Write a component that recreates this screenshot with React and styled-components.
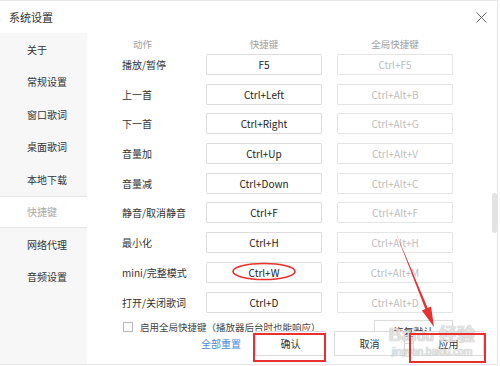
import React from "react";
import styled, { createGlobalStyle } from "styled-components";

const Global = createGlobalStyle`
  html, body { margin: 0; padding: 0; background: #fff; }
  body { font-family: "Noto Sans CJK SC", "Microsoft YaHei", sans-serif; }
  * { box-sizing: border-box; }
`;

const Window = styled.div`
  position: relative;
  width: 498px;
  height: 365px;
  border: 1px solid #e6e6e6;
  border-left: none;
  background: #fff;
  display: flex;
  flex-direction: column;
  overflow: hidden;
`;

const TitleBar = styled.div`
  height: 32px;
  flex: none;
  display: flex;
  align-items: center;
  justify-content: space-between;
  padding: 0 10px 0 9px;
  font-size: 11px;
  color: #333;
`;

const CloseBtn = styled.div`
  width: 12px;
  height: 12px;
  display: flex;
  align-items: center;
  justify-content: center;
`;

const Body = styled.div`
  flex: 1;
  display: flex;
  min-height: 0;
`;

const Sidebar = styled.div`
  width: 87px;
  flex: none;
  background: #f7f7f7;
  display: flex;
  flex-direction: column;
`;

const NavItem = styled.div`
  height: 32.5px;
  display: flex;
  align-items: center;
  padding-left: 27px;
  font-size: 10px;
  color: ${(p) => (p.$active ? "#a8a8a8" : "#333")};
  background: ${(p) => (p.$active ? "#fff" : "transparent")};
  border-top: 1px solid ${(p) => (p.$active ? "#e6e6e6" : "transparent")};
  border-bottom: 1px solid ${(p) => (p.$active ? "#e6e6e6" : "transparent")};
`;

const Content = styled.div`
  position: relative;
  flex: 1;
  overflow: hidden;
  padding-left: 35px;
`;

const HeadRow = styled.div`
  display: grid;
  grid-template-columns: 69px 116px 116px;
  column-gap: 15px;
  height: 21px;
  align-items: center;
`;

const Grid = styled.div`
  display: grid;
  grid-template-columns: 69px 116px 116px;
  column-gap: 15px;
  row-gap: 8.7px;
  align-items: center;
`;

const HeadCell = styled.div`
  font-size: 9.5px;
  color: #a0a0a0;
  text-align: ${(p) => (p.$center ? "center" : "left")};
  padding-left: ${(p) => (p.$center ? "0" : "11px")};
`;

const Label = styled.div`
  font-size: 10px;
  color: #333;
  white-space: nowrap;
`;

const KeyBox = styled.div`
  height: 21px;
  border: 1px solid ${(p) => (p.$global ? "#e4e4e4" : "#dcdcdc")};
  border-radius: 1px;
  display: flex;
  align-items: center;
  justify-content: center;
  font-size: 10px;
  color: ${(p) => (p.$global ? "#bdbdbd" : "#222")};
`;

const CheckRow = styled.div`
  display: flex;
  align-items: center;
  height: 18px;
  margin-top: 5px;
  width: 331px;
`;

const Checkbox = styled.span`
  width: 10px;
  height: 10px;
  border: 1px solid #b8b8b8;
  background: #fff;
  margin-left: 1px;
  margin-right: 7px;
  flex: none;
`;

const CheckText = styled.span`
  font-size: 9.5px;
  color: #444;
  white-space: nowrap;
`;

const RestoreBtn = styled.div`
  margin-left: auto;
  align-self: flex-start;
  margin-top: 2px;
  width: 79px;
  height: 24px;
  flex: none;
  border: 1px solid #dcdcdc;
  display: flex;
  align-items: center;
  justify-content: center;
  font-size: 10px;
  color: #333;
  background: #fff;
`;

const Footer = styled.div`
  position: absolute;
  right: 13px;
  bottom: 8px;
  display: flex;
  align-items: center;
  gap: 8px;
`;

const ResetLink = styled.span`
  font-size: 10px;
  color: #4a8ad6;
  margin-right: 6px;
`;

const Button = styled.div`
  width: 71px;
  height: 25px;
  border: 1px solid #dcdcdc;
  background: #fff;
  display: flex;
  align-items: center;
  justify-content: center;
  font-size: 10px;
  color: #333;
`;

const ScrollThumb = styled.div`
  position: absolute;
  right: 0;
  top: 160px;
  width: 5px;
  height: 40px;
  border-radius: 3px;
  background: #e2e2e2;
`;

const Watermark = styled.div`
  position: absolute;
  right: 22px;
  bottom: 6px;
  display: flex;
  flex-direction: column;
  align-items: center;
  pointer-events: none;
  color: rgba(255, 255, 255, 0.7);
  text-shadow: 0 0 1px rgba(130, 130, 130, 0.5), 0 0 1px rgba(130, 130, 130, 0.5);
  font-family: "Liberation Sans", "Noto Sans CJK SC", sans-serif;
`;

const WmTop = styled.div`
  font-size: 18px;
  font-weight: bold;
  line-height: 20px;
  white-space: nowrap;
`;

const WmSmall = styled.span`
  font-size: 14px;
`;

const WmBottom = styled.div`
  font-size: 10px;
  line-height: 12px;
  white-space: nowrap;
`;

const Annotations = styled.svg`
  position: absolute;
  left: 0;
  top: 0;
  width: 500px;
  height: 366px;
  pointer-events: none;
`;

const navItems = ["关于", "常规设置", "窗口歌词", "桌面歌词", "本地下载", "快捷键", "网络代理", "音频设置"];

const rows = [
  ["播放/暂停", "F5", "Ctrl+F5"],
  ["上一首", "Ctrl+Left", "Ctrl+Alt+B"],
  ["下一首", "Ctrl+Right", "Ctrl+Alt+G"],
  ["音量加", "Ctrl+Up", "Ctrl+Alt+V"],
  ["音量减", "Ctrl+Down", "Ctrl+Alt+C"],
  ["静音/取消静音", "Ctrl+F", "Ctrl+Alt+F"],
  ["最小化", "Ctrl+H", "Ctrl+Alt+H"],
  ["mini/完整模式", "Ctrl+W", "Ctrl+Alt+M"],
  ["打开/关闭歌词", "Ctrl+D", "Ctrl+Alt+D"],
];

export default function App() {
  return (
    <>
      <Global />
      <Window>
        <TitleBar>
          <span>系统设置</span>
          <CloseBtn>
            <svg width="11" height="11" viewBox="0 0 11 11">
              <path d="M0.5 0.5L10.5 10.5M10.5 0.5L0.5 10.5" stroke="#666" strokeWidth="1" />
            </svg>
          </CloseBtn>
        </TitleBar>
        <Body>
          <Sidebar>
            {navItems.map((n) => (
              <NavItem key={n} $active={n === "快捷键"}>{n}</NavItem>
            ))}
          </Sidebar>
          <Content>
            <HeadRow>
              <HeadCell>动作</HeadCell>
              <HeadCell $center>快捷键</HeadCell>
              <HeadCell $center>全局快捷键</HeadCell>
            </HeadRow>
            <Grid>
              {rows.map(([a, k, g]) => (
                <React.Fragment key={a}>
                  <Label>{a}</Label>
                  <KeyBox>{k}</KeyBox>
                  <KeyBox $global>{g}</KeyBox>
                </React.Fragment>
              ))}
            </Grid>
            <CheckRow>
              <Checkbox />
              <CheckText>启用全局快捷键（播放器后台时也能响应）</CheckText>
              <RestoreBtn>恢复默认</RestoreBtn>
            </CheckRow>
            <ScrollThumb />
            <Footer>
              <ResetLink>全部重置</ResetLink>
              <Button>确认</Button>
              <Button>取消</Button>
              <Button>应用</Button>
            </Footer>
            <Watermark>
              <WmTop>Bai<WmSmall>du</WmSmall> 经验</WmTop>
              <WmBottom>jingyan.baidu.com</WmBottom>
            </Watermark>
          </Content>
        </Body>
        <Annotations viewBox="0 0 500 366">
          <ellipse cx="264" cy="270.5" rx="31" ry="8" fill="none" stroke="#e8302f" strokeWidth="1.6" />
          <polygon
            points="396,232 425.3,308.1 421.9,309.4 434,326 431.1,305.6 427.7,307"
            fill="#e8302f"
          />
          <rect x="254" y="333" width="71" height="27" fill="none" stroke="#e8302f" strokeWidth="2" />
          <rect x="410" y="333" width="75" height="28" fill="none" stroke="#e8302f" strokeWidth="2" />
        </Annotations>
      </Window>
    </>
  );
}
